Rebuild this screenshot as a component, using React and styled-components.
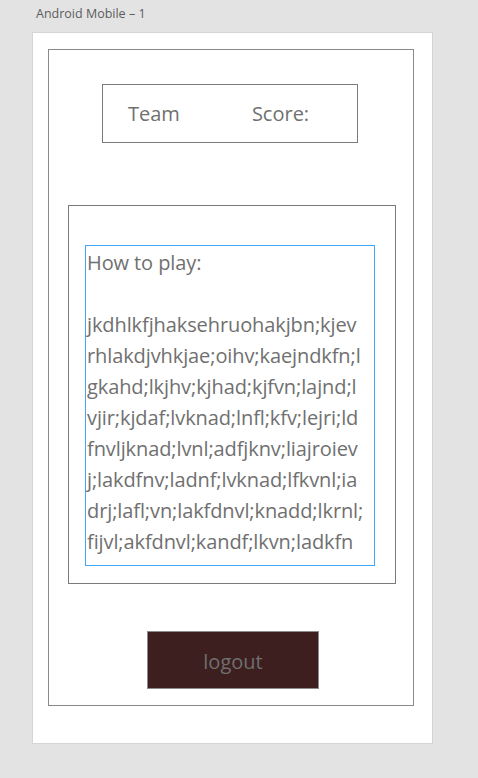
import React from 'react'
import styled, { createGlobalStyle } from 'styled-components'

const GlobalStyle = createGlobalStyle`
  body {
    margin : 0;
    background : #e3e3e3;
    font-family : "Open Sans", "Noto Sans", sans-serif;
  }
`

const Page = styled.div`
  width : 478px;
  height : 778px;
  padding : 5px 0 0 32px;
  box-sizing : border-box;
`

const BoardLabel = styled.div`
  font-size : 12.5px;
  color : #5c5c5c;
  margin-left : 4px;
  height : 27px;
  line-height : 18px;
`

const Artboard = styled.div`
  width : 401px;
  height : 712px;
  background : #fff;
  border : 1px solid #d4d4d4;
  box-sizing : border-box;
  padding : 16px 0 0 15px;
`

const Frame = styled.div`
  width : 366px;
  height : 657px;
  border : 1px solid #8a8a8a;
  box-sizing : border-box;
  display : flex;
  flex-direction : column;
  align-items : center;
  padding-top : 34px;
`

const ScoreBox = styled.div`
  width : 256px;
  height : 59px;
  border : 1px solid #7a7a7a;
  box-sizing : border-box;
  display : flex;
  align-items : center;
  padding-left : 25px;
  gap : 72px;
  margin-left : -2px;
  font-size : 20px;
  color : #707070;
`

const RulesBox = styled.div`
  width : 328px;
  height : 379px;
  margin-top : 62px;
  margin-left : 2px;
  border : 1px solid #7a7a7a;
  box-sizing : border-box;
  padding : 39px 0 0 16px;
`

const TextBox = styled.div`
  width : 290px;
  height : 321px;
  border : 1px solid #42a5f5;
  box-sizing : border-box;
  padding : 1px 0 0 1px;
  font-size : 20px;
  line-height : 31px;
  color : #707070;
  white-space : nowrap;
  overflow : hidden;
  letter-spacing : -0.1px;
`

const Line = styled.div`
  height : 31px;
`

const LogoutButton = styled.button`
  width : 172px;
  height : 58px;
  margin-top : 47px;
  margin-left : 4px;
  background : #3e1f20;
  border : 1px solid #8c8c8c;
  color : #6f6f6f;
  font-family : inherit;
  font-size : 20px;
  padding : 0;
  padding-top : 2px;
  cursor : pointer;
`

const lines = [
  'jkdhlkfjhaksehruohakjbn;kjev',
  'rhlakdjvhkjae;oihv;kaejndkfn;l',
  'gkahd;lkjhv;kjhad;kjfvn;lajnd;l',
  'vjir;kjdaf;lvknad;lnfl;kfv;lejri;ld',
  'fnvljknad;lvnl;adfjknv;liajroiev',
  'j;lakdfnv;ladnf;lvknad;lfkvnl;ia',
  'drj;lafl;vn;lakfdnvl;knadd;lkrnl;',
  'fijvl;akfdnvl;kandf;lkvn;ladkfn',
]

const App = () => {
  return (
    <>
      <GlobalStyle />
      <Page>
        <BoardLabel>Android Mobile – 1</BoardLabel>
        <Artboard>
          <Frame>
            <ScoreBox>
              <span>Team</span>
              <span>Score:</span>
            </ScoreBox>
            <RulesBox>
              <TextBox>
                <Line>How to play:</Line>
                <Line />
                {lines.map((l) => (
                  <Line key={l}>{l}</Line>
                ))}
              </TextBox>
            </RulesBox>
            <LogoutButton>logout</LogoutButton>
          </Frame>
        </Artboard>
      </Page>
    </>
  )
}

export default App
